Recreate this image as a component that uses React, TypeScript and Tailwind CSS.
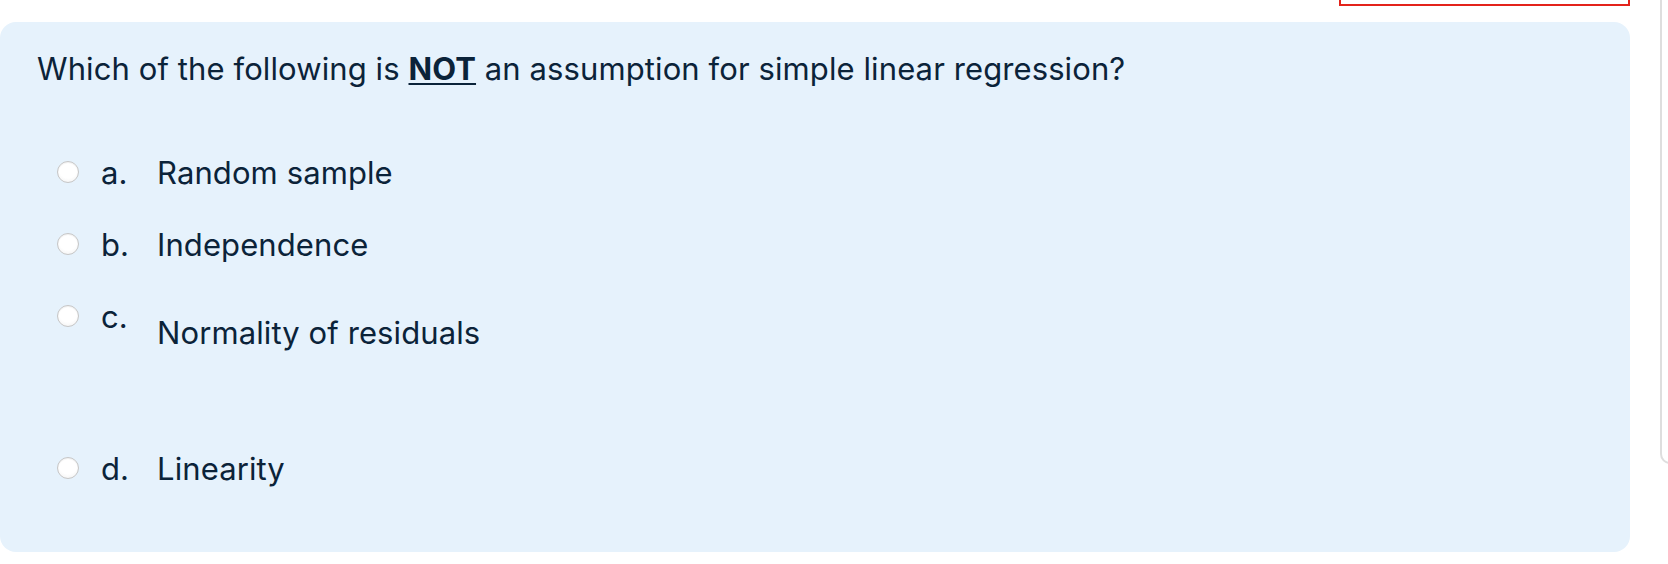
import React from "react"

const options = [
    { letter: "a.", text: "Random sample" },
    { letter: "b.", text: "Independence" },
    { letter: "c.", text: "Normality of residuals", para: true },
    { letter: "d.", text: "Linearity" },
]

const Radio = () => (
    <span className="mt-[8px] ml-[20px] w-[22px] h-[22px] shrink-0 rounded-full border border-[#c6c6c6] bg-[radial-gradient(circle_at_50%_35%,#ffffff_55%,#eeeeee_100%)] shadow-[inset_0_1px_1px_rgba(0,0,0,0.06)]" />
)

export default function App() {
    return (
        <div className="relative w-[1668px] h-[564px] bg-white overflow-hidden font-['Inter',sans-serif] text-[#0b2339] tracking-[0.1px]">
            {/* bits of neighbouring blocks that peek in */}
            <div className="absolute left-[1339px] top-[-40px] w-[291px] h-[46px] border-2 border-[#e3231b]" />
            <div className="absolute left-[1660px] top-[-20px] w-[40px] h-[484px] border-2 border-[#dedede] rounded-bl-[10px]" />

            <div className="mt-[22px] w-[1630px] h-[530px] bg-[#e6f2fc] rounded-[16px] pt-[27px] pl-[37px]">
                <div className="text-[31px] leading-[40px]">
                    Which of the following is <span className="font-bold underline underline-offset-[3px] decoration-2">NOT</span> an assumption for simple linear regression?
                </div>
                <div className="mt-[64px] flex flex-col gap-[32px]">
                    {options.map((o) => (
                        <div key={o.letter} className="flex items-start text-[31px] leading-[40px]">
                            <Radio />
                            <span className="ml-[22px] w-[56px] shrink-0">{o.letter}</span>
                            {o.para ? (
                                <div>
                                    <p className="mt-[16px] mb-[64px]">{o.text}</p>
                                </div>
                            ) : (
                                <span>{o.text}</span>
                            )}
                        </div>
                    ))}
                </div>
            </div>
        </div>
    )
}
